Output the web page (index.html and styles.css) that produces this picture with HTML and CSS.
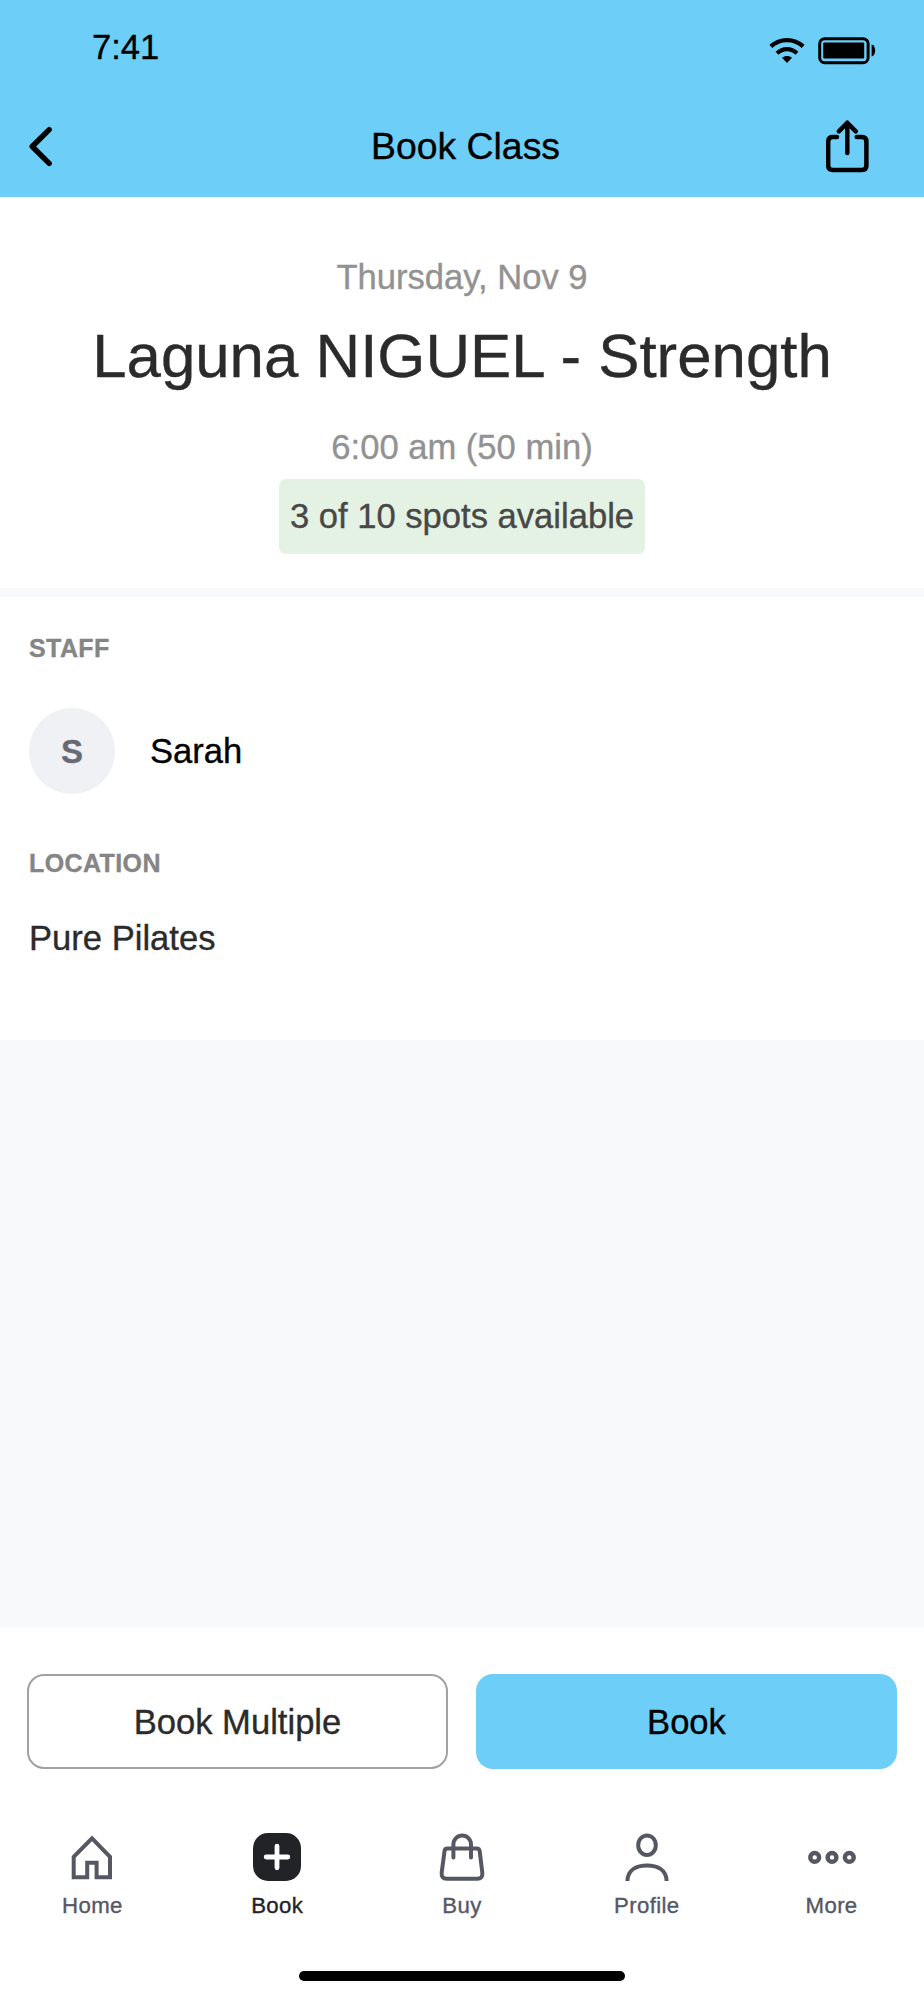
FILE: index.html
```html
<!DOCTYPE html>
<html lang="en">
<head>
<meta charset="utf-8">
<title>Book Class</title>
<link rel="stylesheet" href="styles.css">
</head>
<body>
<div class="screen">
  <header class="top">
    <div class="status">
      <span class="time">7:41</span>
      <div class="indicators">
        <svg width="36" height="28" viewBox="0 0 36 28" fill="none" stroke="#000" stroke-width="4.2">
          <path d="M1.8 9.4C11 .9 25 .9 34.2 9.4"/>
          <path d="M8 16.2c5.8-5.5 14.2-5.5 20 0"/>
          <path d="M18 26l-5-5.2c2.8-2.5 7.2-2.5 10 0z" fill="#000" stroke="none"/>
        </svg>
        <svg width="58" height="28" viewBox="0 0 58 28">
          <rect x="1.7" y="1.7" width="48.4" height="24" rx="5" fill="none" stroke="#000" stroke-width="3"/>
          <rect x="5.2" y="5.6" width="41" height="15.8" rx="1" fill="#000"/>
          <path d="M53.6 7.4c4.8 1.2 4.8 10.8 0 12z" fill="#000"/>
        </svg>
      </div>
    </div>
    <nav class="titlebar">
      <svg class="back" width="26" height="44" viewBox="0 0 26 44" fill="none" stroke="#000" stroke-width="5.4" stroke-linecap="round" stroke-linejoin="round"><path d="M22.2 5.6L5.2 22.5l17 16.9"/></svg>
      <h2 class="title">Book Class</h2>
      <svg class="share" width="44" height="54" viewBox="0 0 44 54" fill="none" stroke="#000" stroke-width="4.5" stroke-linecap="round" stroke-linejoin="round">
        <path d="M11 18H6.7q-4.5 0-4.5 4.5v24q0 4.5 4.5 4.5h29.2q4.5 0 4.5-4.5v-24q0-4.5-4.5-4.5h-5.2"/>
        <path d="M21.3 34V4M12.8 12.4L21.3 3.7l8.5 8.7"/>
      </svg>
    </nav>
  </header>

  <section class="hero">
    <p class="muted date">Thursday, Nov 9</p>
    <h1 class="name">Laguna NIGUEL - Strength</h1>
    <p class="muted hour">6:00 am (50 min)</p>
    <span class="spots">3 of 10 spots available</span>
  </section>

  <section class="details">
    <h3 class="label">STAFF</h3>
    <div class="staff"><span class="avatar">S</span><span>Sarah</span></div>
    <h3 class="label">LOCATION</h3>
    <p class="place">Pure Pilates</p>
  </section>

  <footer class="bottom">
    <div class="actions">
      <button class="btn outline">Book Multiple</button>
      <button class="btn primary">Book</button>
    </div>
    <nav class="tabs">
      <a class="tab">
        <svg class="icon" viewBox="0 0 48 48"><path d="M5.7 44.3V23.8L24 5.4l18 18.4v20.5H28.6V29.7h-9.4v14.6z"/></svg>
        Home
      </a>
      <a class="tab active">
        <svg class="icon" viewBox="0 0 48 48"><rect width="48" height="48" rx="15" fill="#212327" stroke="none"/><path d="M24 13.2v21.6M13.2 24h21.6" stroke="#fff" stroke-width="4.8" stroke-linecap="round"/></svg>
        Book
      </a>
      <a class="tab">
        <svg class="icon" viewBox="0 0 48 48"><path d="M9.5 15.5h29.2q2.6 0 3 2.7l2.6 21.2q.6 6.4-5 6.4H8.7q-5.6 0-5-6.4l2.8-21.2q.3-2.7 3-2.7z"/><path d="M15.4 24.6V11.3a8.8 8.8 0 0117.6 0v13.3" stroke-linecap="round"/></svg>
        Buy
      </a>
      <a class="tab">
        <svg class="icon" viewBox="0 0 48 48"><ellipse cx="24" cy="12.2" rx="8.8" ry="9.8"/><path d="M4.4 48C4.8 36.5 14 32.6 24 32.6S43.2 36.5 43.6 48"/></svg>
        Profile
      </a>
      <a class="tab">
        <svg class="icon dots" viewBox="0 0 48 48"><circle cx="6.7" cy="24.4" r="4.4"/><circle cx="24" cy="24.4" r="4.4"/><circle cx="41.3" cy="24.4" r="4.4"/></svg>
        More
      </a>
    </nav>
    <div class="home-bar"></div>
  </footer>
</div>
</body>
</html>
```
FILE: styles.css
```css
* { box-sizing: border-box; }
body, h1, h2, h3, p { margin: 0; font-weight: 400; }
body { font-family: "Liberation Sans", Arial, sans-serif; font-size: 34.6px; line-height: 40px; color: #2b2b2b; -webkit-text-stroke: 0.35px currentColor; }
svg { display: block; }

.screen { width: 924px; height: 2000px; display: flex; flex-direction: column; background: #f8f9fb; }

.top { height: 196.5px; background: #6dcff8; color: #000; }
.status { display: flex; justify-content: space-between; padding: 27px 48.5px 0 92px; height: 100px; }
.indicators { display: flex; gap: 13px; padding-top: 10px; }
.titlebar { display: grid; grid-template-columns: 100px 1fr 100px; align-items: center; height: 92px; padding: 0 54px 0 27px; }
.title { font-size: 37.4px; text-align: center; padding-left: 34px; }
.share { justify-self: end; }

.hero { display: flex; flex-direction: column; align-items: center; height: 391.5px; padding-top: 60.5px; background: #fff; }
.muted { color: #929292; }
.name { font-size: 61.8px; line-height: 72px; margin: 23px 0 35px; white-space: nowrap; }
.spots { margin-top: 11.5px; width: 366.5px; height: 75.5px; line-height: 74px; text-align: center; border-radius: 7px; background: #e4f2e4; color: #484848; white-space: nowrap; }

.details { height: 443px; margin-top: 9px; padding: 37px 29px 0; background: #fff; }
.label { font-size: 25px; line-height: 29px; font-weight: 700; letter-spacing: 0.4px; color: #858585; }
.staff { display: flex; align-items: center; gap: 35px; margin: 45px 0 55px; color: #000; }
.avatar { width: 86px; height: 86px; line-height: 87px; border-radius: 50%; background: #eff1f4; color: #686a75; font-size: 33px; font-weight: 700; text-align: center; }
.place { margin-top: 40px; }

.bottom { height: 373px; margin-top: auto; padding-top: 47px; background: #fff; }
.actions { display: grid; grid-template-columns: 1fr 1fr; gap: 28px; padding: 0 27px; }
.btn { height: 95px; padding: 0; border: 0; border-radius: 17px; font: inherit; }
.outline { border: 2px solid #a1a1a1; background: #fff; color: #2b2b2b; }
.primary { background: #6dcff8; color: #000; }
.tabs { display: flex; margin-top: 64px; }
.tab { flex: 1 1 0; display: flex; flex-direction: column; align-items: center; gap: 12px; font-size: 22.2px; line-height: 26px; letter-spacing: 0.35px; color: #555862; }
.active { color: #212327; }
.icon { width: 48px; height: 48px; fill: none; stroke: #555862; stroke-width: 4; }
.dots { stroke-width: 4.4; }
.home-bar { width: 326px; height: 10px; margin: 52px auto 0; border-radius: 5px; background: #000; }
```
